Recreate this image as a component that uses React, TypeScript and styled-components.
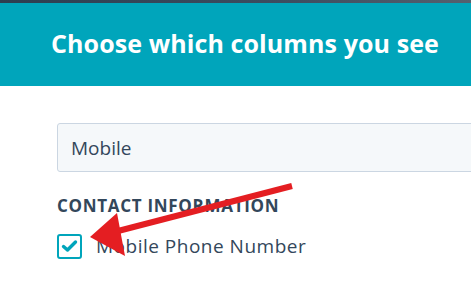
import React from "react";
import styled, { createGlobalStyle } from "styled-components";

const GlobalStyle = createGlobalStyle`
  html, body {
    margin: 0;
    padding: 0;
    background: #ffffff;
    overflow: hidden;
  }
  body {
    font-family: "Open Sans", "Liberation Sans", sans-serif;
  }
`;

const Page = styled.div`
  position: relative;
  width: 471px;
  height: 301px;
  overflow: hidden;
  background: #ffffff;
`;

const TopStrip = styled.div`
  height: 3px;
  background: linear-gradient(90deg, #2d3e50 0%, #3c4d60 60%, #55606e 100%);
`;

const Header = styled.div`
  height: 83px;
  background: #00a5bb;
  display: flex;
  align-items: center;
  padding-left: 51px;
  box-sizing: border-box;
`;

const Title = styled.h1`
  margin: 0;
  margin-top: -3px;
  color: #ffffff;
  font-family: "Open Sans", "Liberation Sans", sans-serif;
  font-weight: 700;
  font-size: 25px;
  letter-spacing: 0.1px;
`;

const Body = styled.div`
  padding: 37px 0 0 57px;
  display: flex;
  flex-direction: column;
`;

const SearchInput = styled.div`
  width: 440px;
  height: 49px;
  box-sizing: border-box;
  border: 1px solid #cbd6e2;
  border-radius: 3px;
  background: #f5f8fa;
  display: flex;
  align-items: center;
  padding-left: 13px;
  color: #33475b;
  font-size: 19px;
`;

const SectionLabel = styled.div`
  margin-top: 22px;
  color: #33475b;
  font-size: 17px;
  font-weight: 700;
  letter-spacing: 0.7px;
`;

const OptionRow = styled.label`
  margin-top: 16px;
  display: flex;
  align-items: center;
  gap: 14px;
  color: #33475b;
  font-size: 19px;
  letter-spacing: 0.5px;
`;

const CheckBox = styled.span`
  width: 25px;
  height: 25px;
  box-sizing: border-box;
  border: 2px solid #00a5bb;
  border-radius: 3px;
  background: #ffffff;
  display: flex;
  align-items: center;
  justify-content: center;
`;

const ArrowLayer = styled.svg`
  position: absolute;
  left: 0;
  top: 0;
  pointer-events: none;
`;

export default function App() {
  return (
    <Page>
      <GlobalStyle />
      <TopStrip />
      <Header>
        <Title>Choose which columns you see</Title>
      </Header>
      <Body>
        <SearchInput>Mobile</SearchInput>
        <SectionLabel>CONTACT INFORMATION</SectionLabel>
        <OptionRow>
          <CheckBox>
            <svg width="17" height="14" viewBox="0 0 17 14">
              <path
                d="M2.5 7.5 L6.5 11 L14.5 3"
                fill="none"
                stroke="#00a5bb"
                strokeWidth="3.4"
                strokeLinecap="round"
                strokeLinejoin="round"
              />
            </svg>
          </CheckBox>
          Mobile Phone Number
        </OptionRow>
      </Body>
      <ArrowLayer width="471" height="301" viewBox="0 0 471 301">
        <line x1="292" y1="186" x2="118" y2="231" stroke="#e41e22" strokeWidth="6" />
        <polygon points="90,237 117,213 125,256" fill="#e41e22" />
      </ArrowLayer>
    </Page>
  );
}
